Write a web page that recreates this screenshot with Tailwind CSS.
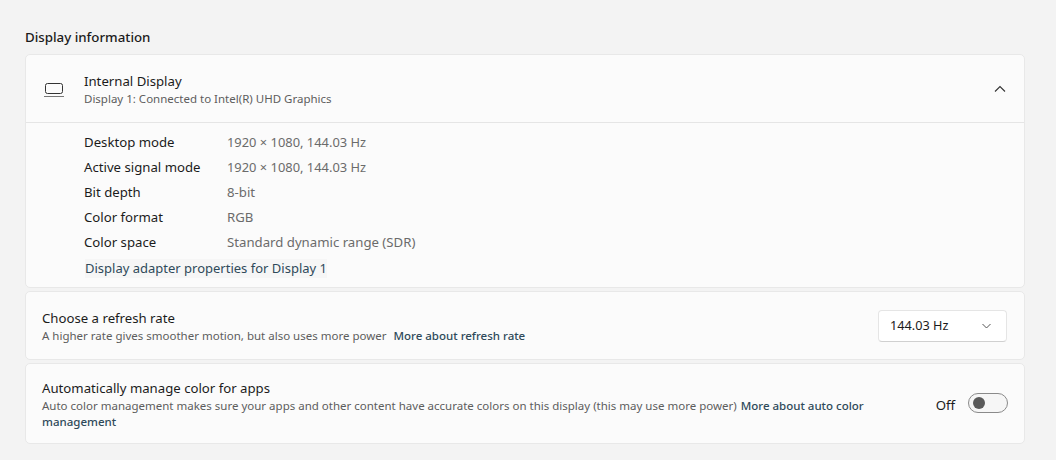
<!DOCTYPE html>
<html lang="en">

<head>
    <meta charset="UTF-8">
    <title>Display information</title>
    <script src="https://cdn.jsdelivr.net/npm/@tailwindcss/browser@4"></script>
</head>

<body class="bg-[#f3f3f3] h-[460px] w-[1056px] overflow-hidden font-['Noto_Sans',sans-serif] text-[#1b1b1b]">
    <div class="pl-[25px] pr-[31px] pt-[28px] flex flex-col">
        <h2 class="text-[13.3px] leading-[18px] font-medium h-[26px]">Display information</h2>

        <!-- Internal display card -->
        <div class="bg-[#fbfbfb] border border-[#e8e8e8] rounded-[5px] h-[234px]">
            <div class="h-[68px] flex items-center border-b border-[#e5e5e5]">
                <svg class="ml-[18px] w-[20px] h-[16px] text-[#333]" viewBox="0 0 20 16" fill="none" stroke="currentColor" stroke-width="1">
                    <rect x="1.5" y="2.5" width="17" height="10" rx="2"></rect>
                    <path d="M0 15.5H20" stroke="#777"></path>
                </svg>
                <div class="ml-[20px] flex-1 pt-[2px]">
                    <div class="text-[13.2px] leading-[18px]">Internal Display</div>
                    <div class="mt-px text-[11.5px] leading-[16px] text-[#5d5d5d]">Display 1: Connected to Intel(R) UHD Graphics</div>
                </div>
                <svg class="mr-[18px] w-[12px] h-[8px] text-[#333]" viewBox="0 0 12 8" fill="none" stroke="currentColor" stroke-width="1.1">
                    <path d="M1 6.5L6 1.5L11 6.5"></path>
                </svg>
            </div>
            <div class="pl-[58px] pt-[7px] text-[13.2px]">
                <div class="flex h-[25px] items-center"><span class="w-[143px]">Desktop mode</span><span class="text-[12.9px] text-[#6b6b6b]">1920 × 1080, 144.03 Hz</span></div>
                <div class="flex h-[25px] items-center"><span class="w-[143px]">Active signal mode</span><span class="text-[12.9px] text-[#6b6b6b]">1920 × 1080, 144.03 Hz</span></div>
                <div class="flex h-[25px] items-center"><span class="w-[143px]">Bit depth</span><span class="text-[#6b6b6b]">8-bit</span></div>
                <div class="flex h-[25px] items-center"><span class="w-[143px]">Color format</span><span class="text-[#6b6b6b]">RGB</span></div>
                <div class="flex h-[25px] items-center"><span class="w-[143px]">Color space</span><span class="text-[#6b6b6b]">Standard dynamic range (SDR)</span></div>
                <div class="mt-[4px] ml-px h-[19px] leading-[19px] w-fit bg-[#f6f6f6] text-[13px] text-[#2f4a5a]">Display adapter properties for Display 1</div>
            </div>
        </div>

        <!-- Refresh rate card -->
        <div class="mt-[3px] bg-[#fbfbfb] border border-[#e8e8e8] rounded-[5px] h-[69px] pl-[16px] pr-[17px] flex items-center justify-between">
            <div class="pt-[2px]">
                <div class="text-[13.2px] leading-[18px]">Choose a refresh rate</div>
                <div class="mt-px text-[11.5px] leading-[16px] text-[#5d5d5d]">A higher rate gives smoother motion, but also uses more power <a class="ml-[4px] text-[11.5px] font-medium text-[#2f4a5a]">More about refresh rate</a></div>
            </div>
            <div class="w-[129px] h-[32px] bg-white border border-[#e5e5e5] border-b-[#d0d0d0] rounded-[4px] flex items-center justify-between pl-[11px] pr-[15px] text-[12.7px]">
                <span>144.03 Hz</span>
                <svg class="w-[9px] h-[6px] text-[#555]" viewBox="0 0 9 6" fill="none" stroke="currentColor" stroke-width="1">
                    <path d="M0.5 1L4.5 5L8.5 1"></path>
                </svg>
            </div>
        </div>

        <!-- Color management card -->
        <div class="mt-[3px] bg-[#fbfbfb] border border-[#e8e8e8] rounded-[5px] h-[81px] pl-[16px] pr-[16px] flex items-center justify-between">
            <div class="w-[860px] pt-[2px]">
                <div class="text-[13.2px] leading-[18px]">Automatically manage color for apps</div>
                <div class="mt-px text-[11.5px] leading-[16px] text-[#5d5d5d]">Auto color management makes sure your apps and other content have accurate colors on this display (this may use more power) <a class="ml-px text-[11.5px] font-medium text-[#2f4a5a]">More about auto color</a><br><a class="text-[11.5px] font-medium text-[#2f4a5a]">management</a></div>
            </div>
            <div class="flex items-center gap-[13px]">
                <span class="mt-[5px] text-[13.2px]">Off</span>
                <div class="w-[40px] h-[20px] rounded-full border border-[#8a8a8a] bg-[#f6f6f6] flex items-center pl-[4px]">
                    <div class="w-[12px] h-[12px] rounded-full bg-[#5a5a5a]"></div>
                </div>
            </div>
        </div>
    </div>
</body>

</html>
